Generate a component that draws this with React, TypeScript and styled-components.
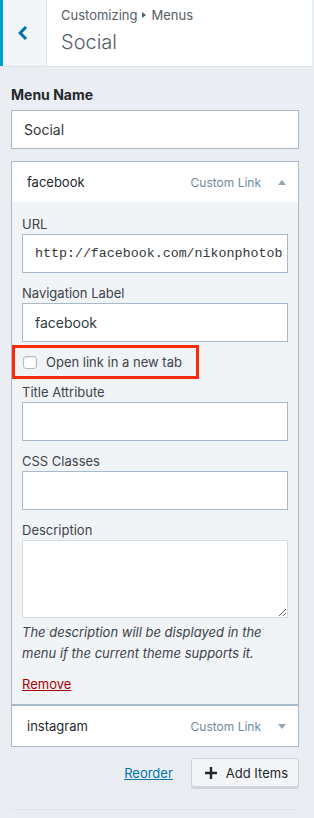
import React from 'react';
import styled, { createGlobalStyle } from 'styled-components';

const GlobalStyle = createGlobalStyle`
  html, body {
    margin: 0;
    padding: 0;
    background: #eaeef2;
  }
  body {
    font-family: Inter, Roboto, "Noto Sans", sans-serif;
    color: #32373c;
    -webkit-font-smoothing: antialiased;
  }
  * {
    box-sizing: border-box;
  }
`;

const Panel = styled.div`
  width: 312px;
  min-height: 818px;
  background: #eaeef2;
`;

const Header = styled.div`
  display: flex;
  height: 67px;
  background: #ffffff;
  border-bottom: 1px solid #dde3e8;
`;

const BackButton = styled.button`
  display: flex;
  align-items: center;
  justify-content: center;
  width: 47px;
  height: 100%;
  padding: 0 3px 0 0;
  border: none;
  border-left: 3px solid #00a0d2;
  border-right: 1px solid #dde3e8;
  background: #f3f6f8;
  cursor: pointer;
`;

const Titles = styled.div`
  display: flex;
  flex-direction: column;
  padding: 6px 0 0 14px;
`;

const Breadcrumb = styled.span`
  font-size: 13px;
  line-height: 18px;
  color: #555d66;
  display: flex;
  align-items: center;
  gap: 5px;
`;

const Arrow = styled.span`
  width: 0;
  height: 0;
  border-top: 3px solid transparent;
  border-bottom: 3px solid transparent;
  border-left: 4px solid #555d66;
`;

const PageTitle = styled.span`
  font-size: 20px;
  font-weight: 300;
  line-height: 28px;
  margin-top: 4px;
  color: #555d66;
`;

const Content = styled.div`
  padding: 18px 13px 0 11px;
  display: flex;
  flex-direction: column;
`;

const MenuNameLabel = styled.label`
  font-size: 14px;
  font-weight: 700;
  line-height: 20px;
  color: #23282d;
  margin-bottom: 5px;
`;

const TextInput = styled.input<{ $mono?: boolean }>`
  display: block;
  width: 100%;
  height: 39px;
  padding: 0 3px 0 12px;
  border: 1px solid #a8bac9;
  border-radius: 0;
  background: #ffffff;
  font-family: ${(p) => (p.$mono ? '"Liberation Mono", "DejaVu Sans Mono", monospace' : 'inherit')};
  font-size: ${(p) => (p.$mono ? '13.3px' : '14px')};
  color: #32373c;
  outline: none;
`;

const TextArea = styled.textarea`
  display: block;
  width: 100%;
  height: 78px;
  border: 1px solid #d6dadd;
  background: #ffffff;
  resize: vertical;
  outline: none;
`;

const Item = styled.div`
  border: 1px solid #a8bac9;
  background: #ffffff;
`;

const ItemGroup = styled.div`
  display: flex;
  flex-direction: column;
  margin-top: 12px;
  & > ${Item} + ${Item} {
    border-top: none;
  }
`;

const ItemBar = styled.div`
  display: flex;
  align-items: center;
  height: 40px;
  padding: 0 12px 0 15px;
  background: #ffffff;
`;

const ItemTitle = styled.span`
  flex: 1;
  font-size: 13px;
  color: #23282d;
`;

const ItemType = styled.span`
  font-size: 12px;
  color: #6e8aa1;
  margin-right: 17px;
`;

const Toggle = styled.span<{ $open?: boolean }>`
  width: 0;
  height: 0;
  border-left: 4px solid transparent;
  border-right: 4px solid transparent;
  ${(p) => (p.$open ? 'border-bottom: 5px solid #8fa6b8;' : 'border-top: 5px solid #8fa6b8;')}
`;

const Settings = styled.div`
  display: flex;
  flex-direction: column;
  padding: 11px 10px 10px 10px;
  background: #f1f4f7;
  border-top: 1px solid #f1f4f7;
  border-bottom: 1px solid #a8bac9;
`;

const Field = styled.div`
  display: flex;
  flex-direction: column;
  margin-bottom: 10px;
`;

const FieldLabel = styled.label`
  font-size: 13px;
  line-height: 20px;
  color: #3c434a;
`;

const Highlight = styled.div`
  align-self: flex-start;
  margin: -7px 0 3px -10px;
  padding: 0 14px 0 8px;
  height: 34px;
  display: flex;
  align-items: center;
  border: 3px solid #fb2a0c;
`;

const CheckLabel = styled.label`
  display: flex;
  align-items: center;
  gap: 9px;
  font-size: 13px;
  color: #3c434a;
  cursor: pointer;
`;

const CheckBox = styled.span`
  width: 14px;
  height: 13px;
  border: 1px solid #b4b9be;
  border-radius: 3px;
  background: #ffffff;
  box-shadow: inset 0 1px 2px rgba(0, 0, 0, 0.08);
`;

const Help = styled.p`
  margin: -6px 0 0;
  font-size: 13px;
  font-style: italic;
  line-height: 21px;
  color: #3c434a;
`;

const RemoveLink = styled.a`
  margin-top: 10px;
  font-size: 13px;
  line-height: 20px;
  color: #a00;
  text-decoration: underline;
  align-self: flex-start;
  cursor: pointer;
`;

const Actions = styled.div`
  display: flex;
  justify-content: flex-end;
  align-items: center;
  gap: 18px;
  margin-top: 11px;
`;

const ReorderLink = styled.a`
  font-size: 13px;
  color: #0073aa;
  text-decoration: underline;
  cursor: pointer;
`;

const AddButton = styled.button`
  display: flex;
  align-items: center;
  gap: 9px;
  height: 29px;
  padding: 0 10px 0 13px;
  border: 1px solid #ccd5dc;
  border-radius: 3px;
  background: #f3f5f6;
  box-shadow: 0 2px 0 #ccd5dc;
  font-family: inherit;
  font-size: 13px;
  color: #23282d;
  cursor: pointer;
`;

const Divider = styled.hr`
  margin: 22px 0 0;
  border: none;
  border-top: 1px solid #dde3e8;
`;

const fields = [
  { label: 'URL', value: 'http://facebook.com/nikonphotobrand', mono: true },
  { label: 'Navigation Label', value: 'facebook' },
];

const extraFields = ['Title Attribute', 'CSS Classes'];

export default function App() {
  return (
    <Panel>
      <GlobalStyle />
      <Header>
        <BackButton aria-label="Back">
          <svg width="12" height="14" viewBox="0 0 12 14">
            <path d="M9 1 L3.2 7 L9 13" fill="none" stroke="#0073aa" strokeWidth="3" />
          </svg>
        </BackButton>
        <Titles>
          <Breadcrumb>
            Customizing <Arrow /> Menus
          </Breadcrumb>
          <PageTitle>Social</PageTitle>
        </Titles>
      </Header>
      <Content>
        <MenuNameLabel>Menu Name</MenuNameLabel>
        <TextInput defaultValue="Social" />
        <ItemGroup>
          <Item>
            <ItemBar>
              <ItemTitle>facebook</ItemTitle>
              <ItemType>Custom Link</ItemType>
              <Toggle $open />
            </ItemBar>
            <Settings>
              {fields.map((f) => (
                <Field key={f.label}>
                  <FieldLabel>{f.label}</FieldLabel>
                  <TextInput $mono={f.mono} defaultValue={f.value} />
                </Field>
              ))}
              <Highlight>
                <CheckLabel>
                  <CheckBox />
                  Open link in a new tab
                </CheckLabel>
              </Highlight>
              {extraFields.map((label) => (
                <Field key={label}>
                  <FieldLabel>{label}</FieldLabel>
                  <TextInput />
                </Field>
              ))}
              <Field>
                <FieldLabel>Description</FieldLabel>
                <TextArea />
              </Field>
              <Help>The description will be displayed in the menu if the current theme supports it.</Help>
              <RemoveLink>Remove</RemoveLink>
            </Settings>
          </Item>
          <Item>
            <ItemBar>
              <ItemTitle>instagram</ItemTitle>
              <ItemType>Custom Link</ItemType>
              <Toggle />
            </ItemBar>
          </Item>
        </ItemGroup>
        <Actions>
          <ReorderLink>Reorder</ReorderLink>
          <AddButton>
            <svg width="12" height="12" viewBox="0 0 12 12">
              <path d="M6 0 V12 M0 6 H12" stroke="#23282d" strokeWidth="2.4" />
            </svg>
            Add Items
          </AddButton>
        </Actions>
        <Divider />
      </Content>
    </Panel>
  );
}
